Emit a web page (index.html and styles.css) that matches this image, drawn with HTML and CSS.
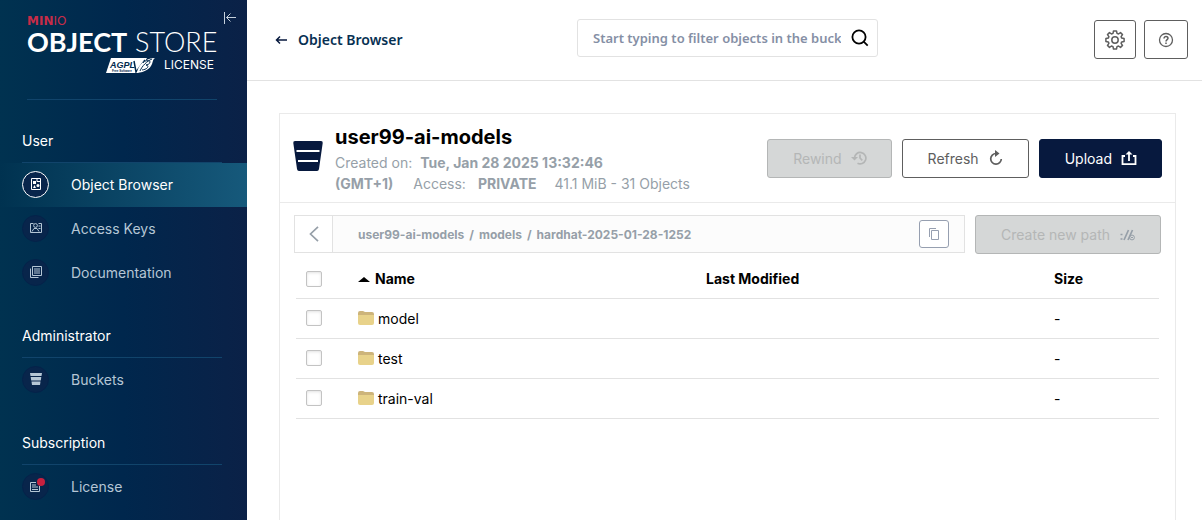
FILE: index.html
```html
<!DOCTYPE html>
<html lang="en">
<head>
<meta charset="utf-8">
<meta name="viewport" content="width=device-width, initial-scale=1">
<title>Object Browser</title>
<link rel="stylesheet" href="styles.css">
</head>
<body>
<div class="app">
  <aside class="sidebar">
    <div class="brand">
      <svg class="logo" width="190" height="60" viewBox="0 0 190 60" role="img" aria-label="MinIO Object Store, AGPL v3 License">
        <text class="logo-minio" x="0" y="10"><tspan class="logo-minio-bold">MIN</tspan>IO</text>
        <text class="logo-object" x="0" y="37">OBJECT</text>
        <text class="logo-store" x="108" y="37">STORE</text>
        <path d="M84 43H120L111 58H79Z" fill="#fff"/>
        <text class="logo-agpl" x="83" y="53">AGPL</text>
        <text class="logo-free" x="85" y="57">Free Software</text>
        <path d="M107 46l2 11 9-12" fill="none" stroke="#00284c" stroke-width="1.500"/>
        <path d="M110 58c1-8 8-15 18-15-2 1-2 3-3 6-2 5-7 8-15 9z" fill="#fff"/>
        <path d="M113 56c2-5 7-10 12-12M116 48c2-3 7-3 7-1s-3 3-4 3c3 0 3 4-4 5" fill="none" stroke="#00284c"/>
        <text class="logo-license" x="137" y="54">LICENSE</text>
      </svg>
      <button class="collapse" aria-label="Collapse menu">
        <svg width="14" height="14" viewBox="0 0 14 14" fill="none" stroke="currentColor"><path d="M1.500 1v12M13 6.500H3.500M7.500 2.500l-4 4 4 4"/></svg>
      </button>
    </div>
    <nav class="nav">
      <h2 class="nav-title">User</h2>
      <a class="nav-item active" href="#">
        <span class="nav-icon"><svg width="12" height="14" viewBox="0 0 12 14"><path d="M1.500 1.500h9v11h-9z" fill="none" stroke="currentColor"/><path d="M7 1v3.500h3.500" fill="none" stroke="currentColor"/><path d="M3 4h3v3H3zM3 11l1.500-3L6 11z" fill="currentColor"/><circle cx="8" cy="8.500" r="1.500" fill="currentColor"/></svg></span>
        <span>Object Browser</span>
      </a>
      <a class="nav-item" href="#">
        <span class="nav-icon"><svg width="14" height="12" viewBox="0 0 14 12" fill="none" stroke="currentColor"><path d="M4.500 1.500h-3v9h11v-9h-3M3 9.500l2-3h3l2 3M9.500 4h2M9.500 6.500h2"/><circle cx="6.500" cy="3.500" r="1.900"/></svg></span>
        <span>Access Keys</span>
      </a>
      <a class="nav-item" href="#">
        <span class="nav-icon"><svg width="14" height="14" viewBox="0 0 14 14" fill="none" stroke="currentColor"><path d="M3.500 1.500h9v9h-9zM1.500 3.500v9h8M5 4h6M5 6h6M5 8h6"/></svg></span>
        <span>Documentation</span>
      </a>
      <h2 class="nav-title">Administrator</h2>
      <a class="nav-item" href="#">
        <span class="nav-icon"><svg width="12" height="12" viewBox="0 0 12 12" fill="currentColor"><path d="M0 0h12l-.5 3H.5zM.7 4h10.600l-.5 3.500H1.200zM1.500 8.500h9L10 12H2z"/></svg></span>
        <span>Buckets</span>
      </a>
      <h2 class="nav-title">Subscription</h2>
      <a class="nav-item" href="#">
        <span class="nav-icon"><svg width="14" height="14" viewBox="0 0 14 14" fill="none" stroke="currentColor"><path d="M7 3.500H1.500v9h9V7M3 6h4M3 8h6M3 10.500h6"/></svg><span class="dot"></span></span>
        <span>License</span>
      </a>
    </nav>
  </aside>

  <main class="main">
    <header class="topbar">
      <a class="back" href="#">
        <svg width="12" height="10" viewBox="0 0 12 10" fill="none" stroke="currentColor" stroke-width="1.500"><path d="M12 5H1.500M5 1.500L1.500 5 5 8.500"/></svg>
        <span>Object Browser</span>
      </a>
      <div class="search">
        <input class="search-input" type="text" aria-label="Filter objects" placeholder="Start typing to filter objects in the bucket">
        <svg width="18" height="18" viewBox="0 0 18 18" fill="none" stroke="#000" stroke-width="1.800"><circle cx="8" cy="8" r="6.600"/><path d="M12.700 12.700l4 4"/></svg>
      </div>
      <div class="top-actions">
        <button class="btn btn-settings" aria-label="Settings">
          <svg width="20" height="20" viewBox="0 0 20 20" fill="none" stroke="currentColor" stroke-width="1.500" stroke-linejoin="round"><circle cx="10" cy="10" r="3.200"/><path d="M8.500 1h3l.5 2.400 1.500.6 2-1.400 2 2-1.400 2 .6 1.500 2.400.4v3l-2.400.4-.6 1.500 1.400 2-2 2-2-1.400-1.500.6-.5 2.400h-3L8 16.600 6.500 16l-2 1.400-2-2 1.400-2-.6-1.500L.900 11.500v-3l2.400-.4.600-1.500-1.400-2 2-2 2 1.400L8 3.400z"/></svg>
        </button>
        <button class="btn btn-help" aria-label="Help">
          <svg width="16" height="16" viewBox="0 0 16 16" fill="none" stroke="currentColor" stroke-width="1.300"><circle cx="8" cy="8" r="6.500"/><path d="M6 6.500C6 3.700 10 4 10 6.300 10 7.700 8 7.700 8 9.500M8 10.500V12" stroke-width="1.500"/></svg>
        </button>
      </div>
    </header>

    <section class="panel">
      <div class="bucket-head">
        <svg class="bucket-icon" width="30" height="30" viewBox="0 0 30 30"><path d="M2 0h26q2 0 1.700 2L26 28q-.3 2-2 2H6q-1.700 0-2-2L.300 2Q0 0 2 0z" fill="#07193e"/><path d="M3.500 10h23M5 20h20" stroke="#fff" stroke-width="2"/></svg>
        <div class="bucket-info">
          <h1 class="bucket-name">user99-ai-models</h1>
          <p class="bucket-meta"><span class="label">Created on:</span><strong>Tue, Jan 28 2025 13:32:46<br>(GMT+1)</strong><span class="label access">Access:</span><strong>PRIVATE</strong><span class="usage">41.1 MiB - 31 Objects</span></p>
        </div>
        <div class="bucket-actions">
          <button class="btn" disabled>Rewind
            <svg width="16" height="16" viewBox="0 0 16 16" fill="none" stroke="currentColor" stroke-width="1.700"><path d="M3.500 8a5.700 5.700 0 1 1 3 5.200M9 4.500V8l2.300 2.300"/><path d="M0 7h7L3.500 10.500z" fill="currentColor" stroke="none"/></svg>
          </button>
          <button class="btn">Refresh
            <svg width="16" height="16" viewBox="0 0 16 16" fill="none" stroke="currentColor" stroke-width="1.700"><path d="M9 3.500H8A5.300 5.300 0 1 0 13.300 9"/><path d="M7 0l4.500 3.500L7 7z" fill="currentColor" stroke="none"/></svg>
          </button>
          <button class="btn btn-primary">Upload
            <svg width="16" height="16" viewBox="0 0 16 16" fill="none" stroke="currentColor" stroke-width="1.800"><path d="M4 6H1.500v8.200h13V6H12M8 11V2.500"/><path d="M4.500 4.500L8 1l3.500 3.500z" fill="currentColor" stroke="none"/></svg>
          </button>
        </div>
      </div>

      <div class="browser">
        <div class="path-row">
          <div class="path">
            <button class="path-back" aria-label="Go up">
              <svg width="10" height="16" viewBox="0 0 10 16" fill="none" stroke="currentColor" stroke-width="1.700"><path d="M9 .800L1.500 8 9 15.200"/></svg>
            </button>
            <nav class="crumbs" aria-label="Path"><a href="#">user99-ai-models</a><span>/</span><a href="#">models</a><span>/</span><a href="#">hardhat-2025-01-28-1252</a></nav>
            <button class="copy" aria-label="Copy path">
              <svg width="12" height="14" viewBox="0 0 12 14" fill="none" stroke="currentColor"><path d="M3.500 3.500h7v9h-7zM1.500 10V1.500H8"/></svg>
            </button>
          </div>
          <button class="btn" disabled>Create new path
            <svg class="path-icon" width="16" height="16" viewBox="0 0 16 16" fill="none" stroke="currentColor" stroke-width="1.700"><path d="M1.500 7.500h2M1.500 12h2M5 13L9.500 3M9 13l4.500-10"/><circle cx="13" cy="10.500" r="2.400" stroke-width="1"/><path d="M12 10.500h2" stroke-width="1"/></svg>
          </button>
        </div>

        <table class="objects">
          <colgroup><col class="col-check"><col><col><col class="col-size"></colgroup>
          <thead>
            <tr><th><input type="checkbox" aria-label="Select all"></th><th><span class="name-head"><svg width="12" height="6" viewBox="0 0 12 6"><path d="M0 6l6-5 6 5z"/></svg>Name</span></th><th>Last Modified</th><th>Size</th></tr>
          </thead>
          <tbody>
            <tr><td><input type="checkbox" aria-label="Select model"></td><td><a class="name" href="#"><svg width="16" height="14" viewBox="0 0 16 14"><path d="M0 2q0-2 2-2h3l2 1h7q2 0 2 2v4H0z" fill="#cdb47a"/><path d="M0 4h16v8q0 2-2 2H2q-2 0-2-2z" fill="#e8d28a"/></svg>model</a></td><td></td><td>-</td></tr>
            <tr><td><input type="checkbox" aria-label="Select test"></td><td><a class="name" href="#"><svg width="16" height="14" viewBox="0 0 16 14"><path d="M0 2q0-2 2-2h3l2 1h7q2 0 2 2v4H0z" fill="#cdb47a"/><path d="M0 4h16v8q0 2-2 2H2q-2 0-2-2z" fill="#e8d28a"/></svg>test</a></td><td></td><td>-</td></tr>
            <tr><td><input type="checkbox" aria-label="Select train-val"></td><td><a class="name" href="#"><svg width="16" height="14" viewBox="0 0 16 14"><path d="M0 2q0-2 2-2h3l2 1h7q2 0 2 2v4H0z" fill="#cdb47a"/><path d="M0 4h16v8q0 2-2 2H2q-2 0-2-2z" fill="#e8d28a"/></svg>train-val</a></td><td></td><td>-</td></tr>
          </tbody>
        </table>
      </div>
    </section>
  </main>
</div>
</body>
</html>
```

FILE: styles.css
```css
* { box-sizing: border-box; }
body {
  margin: 0;
  background: #fff;
  color: #000;
  font-family: Inter, "Liberation Sans", sans-serif;
  font-size: 14px;
}
a { color: inherit; text-decoration: none; }
button { font: inherit; cursor: pointer; }
svg { flex: none; }
h1, h2, p { margin: 0; }

.app { display: flex; height: 100vh; overflow: hidden; }

/* Sidebar */
.sidebar {
  flex: none;
  width: 247px;
  background: linear-gradient(90deg, #003250 0%, #00274d 50%, #0b2147 100%);
  color: #fff;
}
.brand {
  position: relative;
  margin: 0 30px 0 27px;
  padding: 15px 0 24px;
  border-bottom: 1px solid #11446b;
}
.logo { display: block; overflow: visible; }
.logo text { fill: #fff; font-family: Lato, sans-serif; }
.logo .logo-minio { fill: #c72c48; font: 12px "DejaVu Sans", sans-serif; }
.logo-minio-bold { font-weight: 700; }
.logo-object { font-size: 27px; font-weight: 700; }
.logo-store { font-size: 27px; font-weight: 300; }
.logo .logo-agpl { fill: #00284c; font: italic 700 9px "Liberation Sans", sans-serif; }
.logo .logo-free { fill: #00284c; font: 700 3px "Liberation Sans", sans-serif; }
.logo .logo-license { font: 12px Inter, sans-serif; }
.collapse {
  position: absolute;
  top: 11px;
  right: -20px;
  display: flex;
  padding: 0;
  border: 0;
  background: none;
  color: #c5d0dc;
}
.nav-title {
  height: 63px;
  margin: 0 25px 0 22px;
  padding-top: 31px;
  border-bottom: 1px solid #11446b;
  font-size: 14px;
  font-weight: 400;
  line-height: 20px;
}
.nav-item {
  display: flex;
  align-items: center;
  gap: 22px;
  height: 44px;
  padding: 0 0 2px 22px;
  color: #b5c6d5;
}
.nav-item.active {
  background: linear-gradient(90deg, #003250, #16597b);
  color: #fff;
}
.nav-icon {
  position: relative;
  display: flex;
  align-items: center;
  justify-content: center;
  width: 27px;
  height: 27px;
  border: 1px solid #04224a;
  border-radius: 50%;
  background: #08254b;
}
.active .nav-icon { border-color: #fff; }
.dot {
  position: absolute;
  top: 4px;
  right: 3px;
  width: 8px;
  height: 8px;
  border-radius: 50%;
  background: #c8203f;
}

/* Top bar */
.main { flex: 1; min-width: 0; display: flex; flex-direction: column; }
.topbar {
  display: grid;
  grid-template-columns: 1fr 301px 1fr;
  align-items: center;
  height: 81px;
  padding: 0 14px 4px 20px;
  border-bottom: 1px solid #e2e2e2;
}
.back {
  display: flex;
  align-items: center;
  gap: 11px;
  padding: 3px 0 0 8px;
  color: #07193e;
  font: 600 14px/20px "Noto Sans", sans-serif;
}
.back span { color: #073052; }
.search {
  display: flex;
  align-items: center;
  gap: 10px;
  height: 38px;
  padding: 0 8px 0 15px;
  border: 1px solid #e2e2e2;
  border-radius: 3px;
}
.search-input {
  flex: 1;
  min-width: 0;
  padding: 0;
  border: 0;
  outline: 0;
  font: 600 13px/20px "Noto Sans", sans-serif;
}
.search-input::placeholder { color: #858fa5; opacity: 1; }
.top-actions { display: flex; justify-content: flex-end; gap: 8px; padding-top: 3px; }

.btn {
  display: inline-flex;
  align-items: center;
  justify-content: center;
  gap: 9px;
  height: 39px;
  padding: 0 25px;
  border: 1px solid #5e5e5e;
  border-radius: 3px;
  background: #fff;
  color: #5e5e5e;
  white-space: nowrap;
}
.btn:disabled { border-color: #b4b6b6; background: #d5d7d7; color: #b4b6b6; }
.btn-primary { border-color: #07193e; background: #07193e; color: #fff; }
.bucket-actions .btn { padding: 0 24px 0 25px; }
.btn-settings { padding: 0 10px; }
.btn-help { padding: 0 13px; }

/* Bucket */
.panel {
  flex: 1;
  margin: 32px 26px 0 32px;
  border: 1px solid #eaeaea;
  border-bottom: 0;
}
.bucket-head {
  display: flex;
  align-items: center;
  gap: 12px;
  padding: 8px 13px;
  border-bottom: 1px solid #eaeaea;
}
.bucket-icon { margin-bottom: 4px; }
.bucket-info { flex: 1; }
.bucket-name { font-size: 20px; font-weight: 700; line-height: 30px; }
.bucket-meta { color: #969fa8; line-height: 21px; }
.bucket-meta strong { font-weight: 700; }
.label { margin-right: 8px; }
.access { margin: 0 12px 0 20px; }
.usage { margin-left: 18px; }
.bucket-actions { display: flex; gap: 10px; }

.browser { padding: 12px 14px; }
.path-row { display: flex; gap: 10px; }
.path {
  flex: 1;
  display: flex;
  align-items: center;
  height: 38px;
  padding-right: 15px;
  border: 1px solid #e2e2e2;
  background: #fcfcfc;
}
.path-back {
  align-self: stretch;
  display: flex;
  align-items: center;
  justify-content: center;
  width: 38px;
  padding: 0;
  border: 0;
  border-right: 1px solid #e2e2e2;
  background: #fff;
  color: #969fa8;
}
.crumbs {
  flex: 1;
  display: flex;
  gap: 5px;
  padding-left: 25px;
  color: #969fa8;
  font-size: 12px;
  font-weight: 700;
}
.copy {
  display: flex;
  align-items: center;
  justify-content: center;
  width: 30px;
  height: 28px;
  padding: 0;
  border: 1px solid #969fb0;
  border-radius: 3px;
  background: #fff;
  color: #969fb0;
}
.path-icon { color: #969fa8; }

.objects {
  width: calc(100% - 4px);
  margin: 4px 2px 0;
  border-collapse: collapse;
  table-layout: fixed;
}
.col-check { width: 52px; }
.col-size { width: 115px; }
.objects th, .objects td {
  height: 40px;
  padding: 0 10px;
  border-bottom: 1px solid #e2e2e2;
  text-align: left;
}
.objects th { padding-top: 2px; font-weight: 700; }
.objects input {
  display: block;
  appearance: none;
  width: 16px;
  height: 16px;
  margin: 0;
  border: 1px solid #c3c3c3;
  border-radius: 2px;
  box-shadow: inset 0 1px 3px #e2e2e2;
}
.name-head { display: flex; align-items: center; gap: 5px; }
.name { display: flex; align-items: center; gap: 4px; }
```
